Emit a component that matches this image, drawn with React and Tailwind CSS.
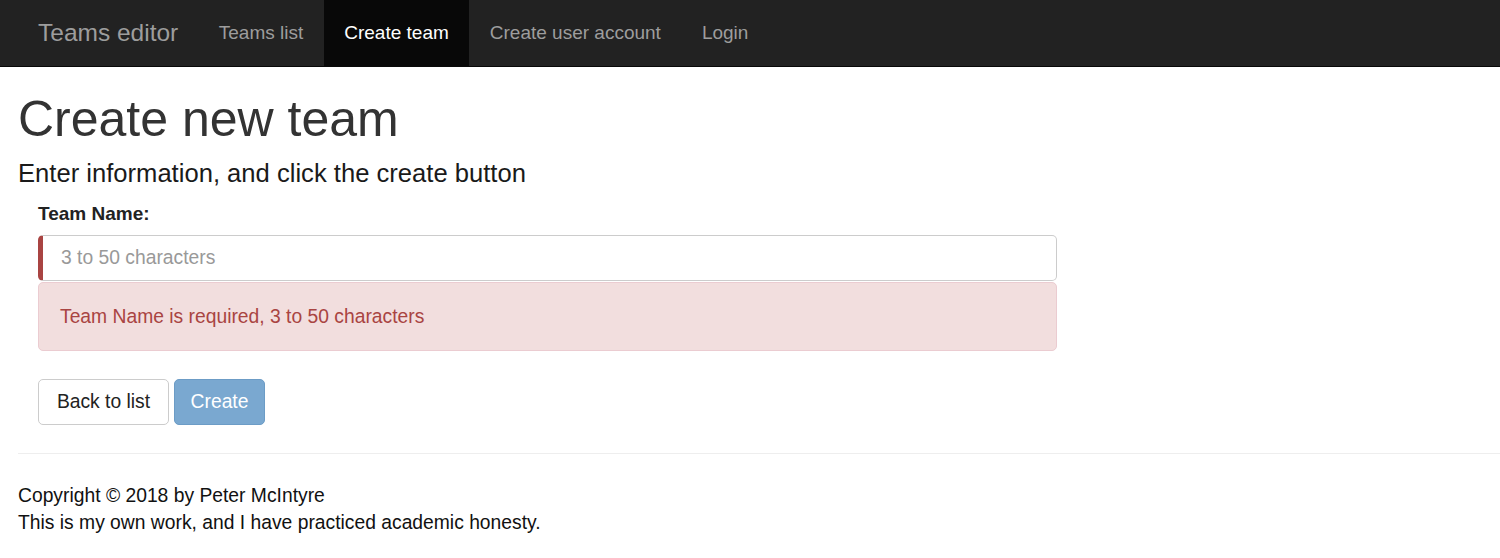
export default function App() {
  const navItems = [
    { label: 'Teams list', active: false },
    { label: 'Create team', active: true },
    { label: 'Create user account', active: false },
    { label: 'Login', active: false },
  ];

  return (
    <div className="min-h-[558px] bg-white text-[#333] font-['Liberation_Sans',Arial,sans-serif]">
      {/* navbar */}
      <nav className="flex h-[67px] items-stretch border-b border-[#080808] bg-[#222] pl-[18px]">
        <a className="flex items-center px-[20px] text-[24.5px] text-[#9d9d9d]">Teams editor</a>
        <ul className="flex items-stretch">
          {navItems.map((item) => (
            <li
              key={item.label}
              className={
                item.active
                  ? 'flex items-center bg-[#080808] px-[20.5px] text-[19px] text-white'
                  : 'flex items-center px-[20.5px] text-[19px] text-[#9d9d9d]'
              }
            >
              {item.label}
            </li>
          ))}
        </ul>
      </nav>

      <main className="pl-[18px]">
        <h1 className="mt-[25px] text-[50px] leading-[55px] font-normal">Create new team</h1>
        <h4 className="mt-[12px] text-[25.6px] leading-[28px] text-[#1a1a1a]">
          Enter information, and click the create button
        </h4>

        <form className="w-[1039px] pl-[20px] pt-[13px]">
          <label className="block text-[19px] leading-[27px] font-bold text-[#222]">Team Name:</label>
          <input
            type="text"
            placeholder="3 to 50 characters"
            className="mt-[8px] block h-[46px] w-full rounded-[5px] border border-l-[5px] border-[#ccc] border-l-[#a94442] bg-white px-[18px] text-[19.3px] text-[#555] placeholder:text-[#999] outline-none"
          />
          <div className="mt-px rounded-[5px] border border-[#ebccd1] bg-[#f2dede] px-[21px] py-[20px] text-[19.3px] leading-[27px] text-[#a94442]">
            Team Name is required, 3 to 50 characters
          </div>

          <div className="mt-[28px] flex gap-[5px]">
            <button
              type="button"
              className="h-[46px] w-[131px] rounded-[5px] border border-[#ccc] bg-white text-[19.3px] text-[#222]"
            >
              Back to list
            </button>
            <button
              type="button"
              disabled
              className="h-[46px] w-[91px] rounded-[5px] border border-[#6c9cc6] bg-[#7aa8d0] text-[19.3px] text-white"
            >
              Create
            </button>
          </div>
        </form>

        <hr className="mt-[28px] border-t border-[#eee]" />

        <footer className="pt-[28px] text-[19.3px] leading-[27px] text-[#111]">
          <p>Copyright © 2018 by Peter McIntyre</p>
          <p>This is my own work, and I have practiced academic honesty.</p>
        </footer>
      </main>
    </div>
  );
}
